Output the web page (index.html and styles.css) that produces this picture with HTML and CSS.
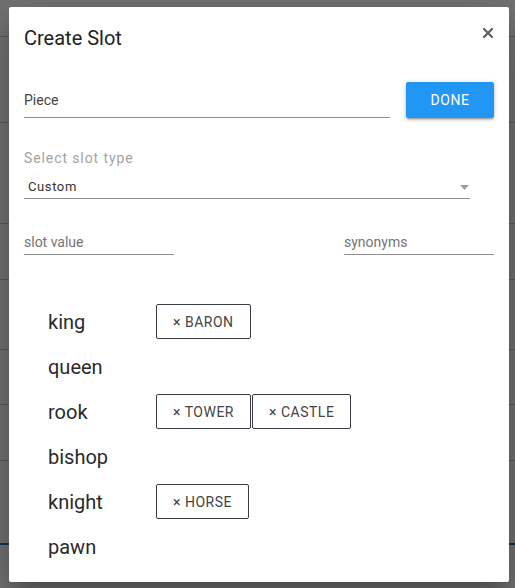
FILE: index.html
```html
<!DOCTYPE html>
<html>
<head>
<meta charset="utf-8">
<link rel="stylesheet" href="styles.css">
</head>
<body>
<div class="page">
  <div class="bg-row r1"></div>
  <div class="bg-row r2"></div>
  <div class="bg-row r3"></div>
  <div class="bg-row r4"></div>
  <div class="bg-row r5"></div>
  <div class="bg-row r6"></div>
  <div class="bg-row r7"></div>
  <div class="bg-row r8 blue"></div>
</div>
<div class="overlay">
  <div class="dialog">
    <div class="header">
      <h2 class="title">Create Slot</h2>
      <svg class="close" width="10" height="10" viewBox="0 0 10 10"><path d="M1 1L9 9M9 1L1 9" stroke="#5f5f5f" stroke-width="2.2" stroke-linecap="square"/></svg>
    </div>
    <div class="name-row">
      <div class="field name-field">Piece</div>
      <button class="done">DONE</button>
    </div>
    <div class="select-label">Select slot type</div>
    <div class="select">
      <span>Custom</span>
      <svg class="caret" width="9" height="5" viewBox="0 0 9 5"><path d="M0 0H9L4.5 5Z" fill="#9e9e9e"/></svg>
    </div>
    <div class="pair-row">
      <div class="field small-field">slot value</div>
      <div class="field small-field">synonyms</div>
    </div>
    <div class="values">
      <div class="value-row"><span class="word">king</span><div class="chips"><span class="chip">× BARON</span></div></div>
      <div class="value-row"><span class="word">queen</span><div class="chips"></div></div>
      <div class="value-row"><span class="word">rook</span><div class="chips"><span class="chip">× TOWER</span><span class="chip">× CASTLE</span></div></div>
      <div class="value-row"><span class="word">bishop</span><div class="chips"></div></div>
      <div class="value-row"><span class="word">knight</span><div class="chips"><span class="chip">× HORSE</span></div></div>
      <div class="value-row"><span class="word">pawn</span><div class="chips"></div></div>
    </div>
  </div>
</div>
</body>
</html>
```

FILE: styles.css
```css
html, body {
  margin: 0;
  padding: 0;
}
body {
  width: 515px;
  height: 588px;
  overflow: hidden;
  background: #fafafa;
  font-family: Roboto, "Liberation Sans", sans-serif;
  position: relative;
}
.page {
  display: flex;
  flex-direction: column;
}
.bg-row {
  border-bottom: 1px solid #c4c4c4;
}
.r1 { height: 36px; }
.r2 { height: 85px; }
.r3 { height: 100px; }
.r4 { height: 55px; }
.r5 { height: 69px; }
.r6 { height: 54px; }
.r7 { height: 55px; }
.r8 { height: 82px; }
.blue { border-bottom: 2px solid #1f6fbf; }
.overlay {
  position: absolute;
  inset: 0;
  background: rgba(0, 0, 0, 0.54);
  padding: 7px 0 0 9px;
}
.dialog {
  width: 500px;
  height: 575px;
  box-sizing: border-box;
  background: #fff;
  border-radius: 2px;
  box-shadow: 0 11px 15px -7px rgba(0,0,0,.2), 0 24px 38px 3px rgba(0,0,0,.14), 0 9px 46px 8px rgba(0,0,0,.12);
  padding: 19px 15px 0 15px;
  color: #333;
}
.header {
  display: flex;
  justify-content: space-between;
  align-items: flex-start;
}
.title {
  margin: 0;
  font-size: 20px;
  line-height: 24px;
  font-weight: 400;
  color: #222;
}
.close {
  margin-top: 2px;
  margin-right: 1px;
}
.name-row {
  display: flex;
  gap: 16px;
  margin-top: 32px;
}
.field {
  box-sizing: border-box;
  border-bottom: 1px solid #8f8f8f;
  font-size: 14px;
}
.name-field {
  width: 366px;
  height: 36px;
  line-height: 36px;
  color: #444;
}
.done {
  width: 88px;
  height: 36px;
  border: none;
  border-radius: 2px;
  background: #2196f3;
  color: #fff;
  font-family: Roboto, "Liberation Sans", sans-serif;
  font-size: 14px;
  letter-spacing: 0.5px;
  padding: 0;
  box-shadow: 0 1px 5px rgba(0,0,0,.2), 0 2px 2px rgba(0,0,0,.14), 0 3px 1px -2px rgba(0,0,0,.12);
}
.select-label {
  margin-top: 32px;
  font-size: 14px;
  line-height: 16px;
  letter-spacing: 0.9px;
  color: #a3a3a3;
}
.select {
  width: 446px;
  height: 33px;
  box-sizing: border-box;
  border-bottom: 1px solid #8f8f8f;
  padding: 8px 1px 0 4px;
  display: flex;
  justify-content: space-between;
  align-items: flex-start;
  font-size: 13px;
  line-height: 25px;
  letter-spacing: 0.6px;
  color: #333;
}
.caret {
  margin-top: 11px;
}
.pair-row {
  display: flex;
  justify-content: space-between;
  margin-top: 22px;
}
.small-field {
  width: 150px;
  height: 34px;
  padding-top: 10px;
  line-height: 23px;
  color: #757575;
}
.values {
  margin-top: 44px;
  padding-left: 24px;
  display: flex;
  flex-direction: column;
}
.value-row {
  height: 45px;
  display: flex;
  align-items: center;
}
.word {
  width: 108px;
  font-size: 20px;
  color: #2a2a2a;
}
.chips {
  display: flex;
  gap: 1px;
}
.chip {
  height: 35px;
  box-sizing: border-box;
  border: 1px solid #3c3c46;
  border-radius: 2px;
  padding: 0 16px;
  display: flex;
  align-items: center;
  font-size: 14px;
  letter-spacing: 0.5px;
  color: #444;
}
```
